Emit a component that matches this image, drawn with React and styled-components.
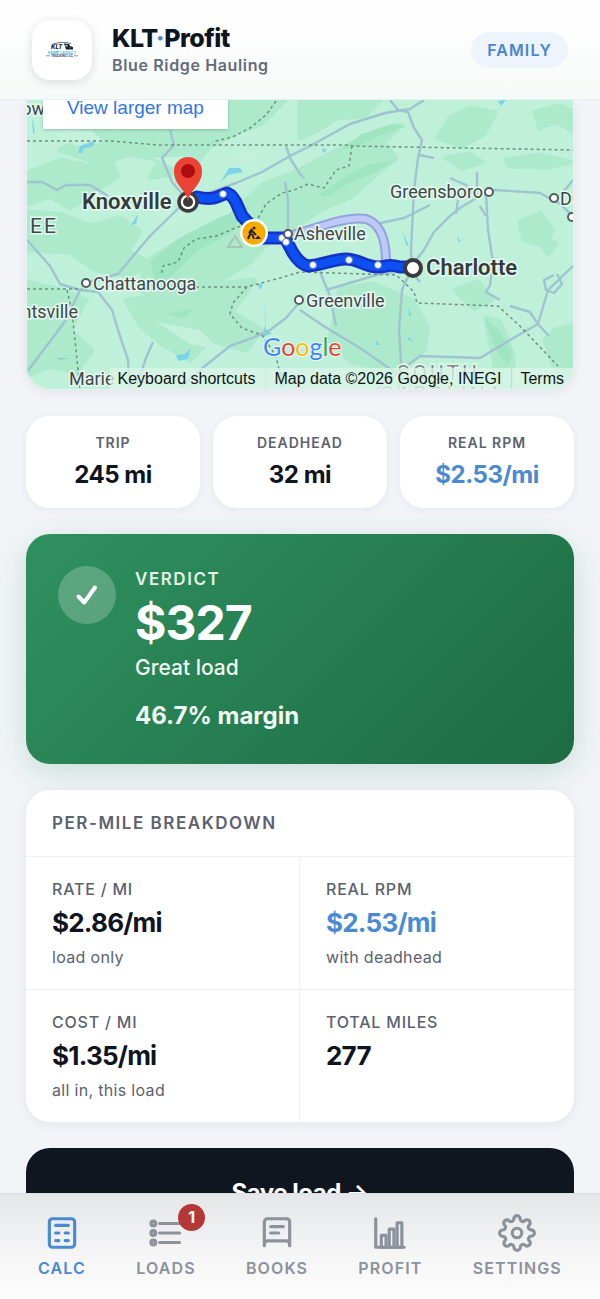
import React from "react";
import styled, { createGlobalStyle, css } from "styled-components";

const stats = [
  { label: "Trip", value: "245 mi" },
  { label: "Deadhead", value: "32 mi" },
  { label: "Real RPM", value: "$2.53/mi", accent: true },
];

const breakdown = [
  { label: "Rate / mi", value: "$2.86/mi", note: "load only" },
  { label: "Real RPM", value: "$2.53/mi", note: "with deadhead", accent: true },
  { label: "Cost / mi", value: "$1.35/mi", note: "all in, this load" },
  { label: "Total miles", value: "277" },
];

const tabs = [
  { label: "Calc", icon: CalcIcon, active: true },
  { label: "Loads", icon: LoadsIcon, count: 1 },
  { label: "Books", icon: BooksIcon },
  { label: "Profit", icon: ProfitIcon },
  { label: "Settings", icon: SettingsIcon },
];

export default function App() {
  return (
    <>
      <GlobalStyle />
      <Header>
        <LogoTile>
          <Logo />
        </LogoTile>
        <Brand>
          <AppName>
            KLT<Dot>·</Dot>Profit
          </AppName>
          <Company>Blue Ridge Hauling</Company>
        </Brand>
        <Plan>Family</Plan>
      </Header>

      <Main>
        <MapCard>
          <RouteMap />
          <LargerMap href="#map">View larger map</LargerMap>
          <Attribution>
            <MapButton type="button">Keyboard shortcuts</MapButton>
            <MapCredit>Map data ©2026 Google, INEGI</MapCredit>
            <MapTerms href="#terms">Terms</MapTerms>
          </Attribution>
        </MapCard>

        <Stats>
          {stats.map(stat => (
            <Stat key={stat.label}>
              <StatLabel>{stat.label}</StatLabel>
              <StatValue $accent={stat.accent}>{stat.value}</StatValue>
            </Stat>
          ))}
        </Stats>

        <Verdict>
          <CheckCircle>
            <svg width="28" height="28" viewBox="0 0 28 28" fill="none">
              <path
                d="M5.5 15.5l5.7 6L22 6.500"
                stroke="#fff"
                strokeWidth="4"
                strokeLinecap="round"
                strokeLinejoin="round"
              />
            </svg>
          </CheckCircle>
          <div>
            <VerdictLabel>Verdict</VerdictLabel>
            <Profit>$327</Profit>
            <VerdictText>Great load</VerdictText>
            <Margin>46.7% margin</Margin>
          </div>
        </Verdict>

        <Card>
          <CardTitle>Per-mile breakdown</CardTitle>
          <Grid>
            {breakdown.map(cell => (
              <Cell key={cell.label}>
                <CellLabel>{cell.label}</CellLabel>
                <CellValue $accent={cell.accent}>{cell.value}</CellValue>
                {cell.note && <CellNote>{cell.note}</CellNote>}
              </Cell>
            ))}
          </Grid>
        </Card>

        <SaveButton type="button">Save load →</SaveButton>
      </Main>

      <Nav>
        {tabs.map(({ label, icon: Icon, active, count }) => (
          <Tab key={label} type="button" $active={active}>
            <Icon />
            {label}
            {count && <Count>{count}</Count>}
          </Tab>
        ))}
      </Nav>
    </>
  );
}

function Logo() {
  return (
    <svg width="34" height="18" viewBox="0 0 34 18">
      <path d="M8 3Q15 .6 22 1.600l4 1" fill="none" stroke="#4a5560" strokeWidth=".8" />
      <text x="6" y="8" fontSize="6" fontWeight="800" fontStyle="italic" fill="#1b232b">
        KLT
      </text>
      <path d="M19 2.500l5 .5 1 2 3 1.200V8.500h-7z" fill="#151b21" />
      <path d="M20.500 4h2v1.500h-2zM24 6.800h2" fill="#8aa" stroke="#8aa" strokeWidth=".6" />
      <text x="17" y="12.500" textAnchor="middle" fontSize="4" fontWeight="600" fill="#4bb4dc">
        KEMP LEGACY
      </text>
      <path d="M1 14.800h4M29 14.800h4" stroke="#5a6670" strokeWidth=".7" />
      <text x="17" y="16" textAnchor="middle" fontSize="3" fontWeight="700" fill="#39434c">
        TRUCKING LLC
      </text>
    </svg>
  );
}

function NavIcon({ children }) {
  return (
    <svg
      width="38"
      height="38"
      viewBox="0 0 24 24"
      fill="none"
      stroke="currentColor"
      strokeWidth="2"
      strokeLinecap="round"
      strokeLinejoin="round"
    >
      {children}
    </svg>
  );
}

function CalcIcon() {
  return (
    <NavIcon>
      <rect x="4" y="3" width="16" height="18" rx="2" />
      <path d="M8 7.200h8M8 12h2M14 12h2M8 16.800h2M14 16.800h2" />
    </NavIcon>
  );
}

function LoadsIcon() {
  return (
    <NavIcon>
      <path d="M8 6h12.500M8 12h12.500M8 18h12.500" />
      <circle cx="4" cy="6" r="1.500" fill="currentColor" fillOpacity=".6" />
      <circle cx="4" cy="12" r="1.500" fill="currentColor" fillOpacity=".6" />
      <circle cx="4" cy="18" r="1.500" fill="currentColor" fillOpacity=".6" />
    </NavIcon>
  );
}

function BooksIcon() {
  return (
    <NavIcon>
      <path d="M4 20V5a2 2 0 0 1 2-2h12a2 2 0 0 1 2 2v15c0-2-.8-3-2-3H6c-1.200 0-2 1-2 3M8 8h8M8 12h5" />
    </NavIcon>
  );
}

function ProfitIcon() {
  return (
    <NavIcon>
      <path d="M3 3v18h18" />
      <rect x="6.500" y="13.500" width="3" height="7.500" />
      <rect x="11.500" y="9.500" width="3" height="11.500" />
      <rect x="16.500" y="5.500" width="3" height="15.500" />
    </NavIcon>
  );
}

function SettingsIcon() {
  return (
    <NavIcon>
      <circle cx="12" cy="12" r="3" />
      <path d="M19.4 15a1.65 1.65 0 0 0 .33 1.82l.06.06a2 2 0 0 1 0 2.83 2 2 0 0 1-2.83 0l-.06-.06a1.65 1.65 0 0 0-1.82-.33 1.65 1.65 0 0 0-1 1.51V21a2 2 0 0 1-2 2 2 2 0 0 1-2-2v-.09A1.65 1.65 0 0 0 9 19.4a1.65 1.65 0 0 0-1.82.33l-.06.06a2 2 0 0 1-2.83 0 2 2 0 0 1 0-2.83l.06-.06a1.65 1.65 0 0 0 .33-1.82 1.65 1.65 0 0 0-1.51-1H3a2 2 0 0 1-2-2 2 2 0 0 1 2-2h.09A1.65 1.65 0 0 0 4.6 9a1.65 1.65 0 0 0-.33-1.82l-.06-.06a2 2 0 0 1 0-2.83 2 2 0 0 1 2.83 0l.06.06a1.65 1.65 0 0 0 1.82.33H9a1.65 1.65 0 0 0 1-1.51V3a2 2 0 0 1 2-2 2 2 0 0 1 2 2v.09a1.65 1.65 0 0 0 1 1.51 1.65 1.65 0 0 0 1.82-.33l.06-.06a2 2 0 0 1 2.83 0 2 2 0 0 1 0 2.83l-.06.06a1.65 1.65 0 0 0-.33 1.82V9a1.65 1.65 0 0 0 1.51 1H21a2 2 0 0 1 2 2 2 2 0 0 1-2 2h-.09a1.65 1.65 0 0 0-1.51 1z" />
    </NavIcon>
  );
}

const route =
  "M197 197Q210 200 217 197L227 193Q234 196 238 207L242 216L254 229L262 238H285L293 253Q300 264 308 266C323 265 333 259 346 259S365 267 378 267S385 263 400 267H412";

function RouteMap() {
  return (
    <MapSvg viewBox="26 100 548 290" role="img" aria-label="Route from Charlotte to Knoxville">
      <rect x="26" y="100" width="548" height="290" fill="#bff0da" />

      {/* forest */}
      <g fill="#adeacc" stroke="#adeacc" strokeWidth="5" strokeLinejoin="round">
        <path d="M76 100H285L262 123L242 131L210 146L190 170L150 178L160 160L130 154L100 164L60 150L90 135L70 118z" />
        <path d="M30 172L60 160L88 166L110 158L118 176L88 196L70 208L50 196L27 204z" />
        <path d="M27 212L60 214L90 226L120 218L140 232L128 252L150 262L130 276L96 270L70 252L27 250z" />
        <path d="M145 262L190 235L230 216L262 185L300 170L338 150L380 130L402 125L384 142L396 158L372 178L352 196L320 210L300 224L270 240L250 262L220 280L180 290L160 300L140 290z" />
        <path d="M126 300L170 295L210 285L255 280L232 312L262 330L246 350L210 340L190 360L160 342L140 325z" />
        <path d="M27 282L60 290L86 300L70 330L92 350L76 372L50 366L27 376z" />
        <path d="M300 100H380L364 116L336 118L318 130L300 138z" />
        <path d="M450 118L470 108L495 113L484 134L462 146L438 138z" />
        <path d="M535 112L560 106L573 112V130L556 122L540 128z" />
        <path d="M520 222L540 213L552 230L546 246L524 240zM535 236L556 244L548 254z" />
        <path d="M340 290L372 284L412 300L428 328L424 350L396 372L352 362L330 340z" />
        <path d="M455 290L478 282L492 300L474 308zM486 318L500 322L513 356V390H500L492 350z" />
        <path d="M446 158L470 154L482 162L462 168zM506 160L540 155L570 162L548 167L510 166z" />
        <path d="M545 340L556 330L573 326V378L556 372z" />
      </g>
      <g fill="#9fe5c2">
        <path d="M150 262L176 240L218 218L250 206L232 232L196 252L172 276L156 284z" />
        <path d="M340 150L362 134L392 124L406 126L380 136L358 146z" />
        <path d="M318 196L346 176L368 165L396 160L372 174L346 184L330 196z" />
        <path d="M484 318L500 332L512 352L508 366L494 346z" />
        <path d="M166 314L196 308L184 318z" />
      </g>
      <g fill="#c3f1dc">
        <path d="M96 110L130 118L118 130L92 126zM56 134L92 130L104 142L76 146zM160 120L190 116L182 130zM154 158L190 156L178 170zM232 156L262 150L250 166zM150 206L190 214L170 232zM156 322L200 330L220 350L190 344z" />
      </g>

      {/* water */}
      <g fill="#7dd3e8">
        <path d="M32 118L35 132L33 134zM80 146L96 140L92 147L84 148L82 153H78zM220 183L229 168L240 168L243 172L228 175z" />
        <path d="M131 225L138 214L136 224zM257 285L263 283L261 290zM176 355L184 354L191 349L188 359L178 361zM56 358L70 358L60 360z" />
        <path d="M403 232L409 246L406 245zM457 236L461 242L458 241zM498 101L506 100L501 106zM408 308L412 316H409zM376 340L380 345H376zM408 337L414 341L408 340z" />
        <path d="M264 300L266 322L262 338L272 333L266 330zM280 372H284V386H280zM322 148L327 150L323 153z" />
      </g>

      {/* highways */}
      <g fill="none" stroke="#a0c3d0" strokeWidth="2.4" strokeLinejoin="round">
        <path d="M27 182L42 182L57 190L66 185L90 185L108 196" />
        <path d="M170 130L174 145L162 158L172 182L187 200L150 236L118 274L88 282M66 320L27 372" />
        <path d="M27 240L50 266L60 284L80 290L66 320M80 290L98 292L112 310L118 330L128 360L130 390" />
        <path d="M190 200L236 183L262 172L290 156L310 146L350 124L385 113L410 109L424 100" />
        <path d="M390 100L398 110L408 112L414 128L422 140L418 158L414 190L411 250L412 268L402 290L399 330L402 378L398 390" />
        <path d="M419 155L434 158M286 146L290 158L300 174L304 178M288 236V200L285 182" />
        <path d="M412 265L424 250L434 232L450 216L460 208L480 196L495 190L540 193L560 204L573 216" />
        <path d="M376 224L404 218L430 205M450 178L466 185L475 196L477 190V172M486 194L488 230L493 262L490 285L486 292L500 300" />
        <path d="M480 206L486 216M458 200L456 214M573 180L560 196" />
        <path d="M298 304L286 318L270 330L252 338L230 346L200 370L180 388" />
        <path d="M300 310L322 325L340 336L360 348L386 366L412 384" />
        <path d="M320 272L330 296L336 326M326 290L380 274L410 270L420 282M376 390L420 356L480 358L510 340L538 324L548 290L573 266" />
        <path d="M510 306L530 312L538 324L549 336M554 275L544 280L546 290L554 293L562 284L557 274M153 342L146 358L140 376" />
      </g>

      {/* state lines */}
      <g fill="none" stroke="#6d927f" strokeWidth="1.500" strokeDasharray="3 3">
        <path d="M27 141H112L160 145H350L352 146L573 150" />
        <path d="M276 101L266 115L250 128L232 137L212 142" />
        <path d="M352 146L349 166L336 170L324 188L308 184L294 190L282 193L266 204L256 222L238 227L216 236L196 239L184 248L178 262L163 266L161 276" />
        <path d="M27 289H82M196 287H246L280 278L300 272L396 275L406 284L414 292L417 303L498 306L520 326L558 366" />
        <path d="M247 287L233 303L230 314L242 328L262 335L276 356L280 374M67 290L72 312L76 350L80 390" />
      </g>
      <path d="M228 247L235 236L242 247z" fill="none" stroke="#a9c5b5" strokeWidth="2" />

      {/* alternate and main route */}
      <g fill="none" strokeLinecap="round" strokeLinejoin="round">
        <path
          d="M289 236Q315 228 335 222Q356 217 366 219C382 224 386 242 386 262"
          stroke="#95a3dd"
          strokeWidth="10"
        />
        <path
          d="M289 236Q315 228 335 222Q356 217 366 219C382 224 386 242 386 262"
          stroke="#bdc9f7"
          strokeWidth="6"
        />
        <path d={route} stroke="#1431c4" strokeWidth="13" />
        <path d={route} stroke="#0d50f2" strokeWidth="8" />
      </g>
      <g fill="#fff" stroke="#6880b4" strokeWidth="1">
        <circle cx="223" cy="194" r="3.500" />
        <circle cx="282" cy="238" r="3.500" />
        <circle cx="286" cy="242" r="3.500" />
        <circle cx="313" cy="265" r="3.500" />
        <circle cx="349" cy="260" r="3.500" />
        <circle cx="378" cy="265" r="3.500" />
      </g>

      <g fill="#fff" stroke="#555c60" strokeWidth="2">
        <circle cx="288" cy="234" r="4" />
        <circle cx="86" cy="283" r="4" />
        <circle cx="299" cy="300" r="4" />
        <circle cx="489" cy="192" r="4" />
        <circle cx="554" cy="198" r="4" />
        <circle cx="572" cy="217" r="4" />
      </g>
      <circle cx="188" cy="202" r="9" fill="#fff" stroke="#3b3b3d" strokeWidth="3.500" />
      <circle cx="188" cy="202" r="5" fill="#3b3b3d" />
      <circle cx="413" cy="268" r="8" fill="#fff" stroke="#3b3b3d" strokeWidth="4" />

      <path
        d="M188 202C187 190 174 186 174 171A14 14 0 0 1 202 171C202 186 189 190 188 202z"
        fill="#ea4335"
      />
      <circle cx="188" cy="171" r="7" fill="#ad0d0d" />

      {/* road works */}
      <circle cx="254" cy="233" r="14" fill="#fff" />
      <circle cx="254" cy="233" r="11.500" fill="#fbab00" />
      <circle cx="254" cy="228" r="1.500" fill="#222" />
      <path
        d="M252 229l-3 4M251 230l5 5M251 232l-3 7M252 234l2 5"
        fill="none"
        stroke="#222"
        strokeWidth="2"
      />
      <path d="M255 239l3-3.500 3 3.500z" fill="#222" />

      <g
        fontFamily="Roboto, sans-serif"
        fontSize="18"
        fontWeight="400"
        fill="#3f4649"
        stroke="#e4f9ef"
        strokeWidth="3"
        paintOrder="stroke"
      >
        <text x="82" y="209" fontSize="22" fontWeight="600" fill="#35393b">
          Knoxville
        </text>
        <text x="426" y="275" fontSize="22" fontWeight="600" fill="#35393b">
          Charlotte
        </text>
        <text x="30" y="233" fontSize="21" letterSpacing="2">
          EE
        </text>
        <text x="45" y="115" textAnchor="end">
          Bow
        </text>
        <text x="93" y="290">Chattanooga</text>
        <text x="78" y="318" textAnchor="end">
          Huntsville
        </text>
        <text x="294" y="240">Asheville</text>
        <text x="306" y="307">Greenville</text>
        <text x="390" y="198">Greensboro</text>
        <text x="560" y="205">Durham</text>
        <text x="69" y="385">Marie</text>
        <text x="397" y="380" fontSize="21" letterSpacing="3" fill="#7e8b86">
          SOUTH
        </text>
        <text x="380" y="401" fontSize="21" letterSpacing="3" fill="#7e8b86">
          CAROLINA
        </text>
      </g>
      <text
        x="263"
        y="356"
        fontFamily="Lato, sans-serif"
        fontSize="25"
        fontWeight="400"
        stroke="#e9faf2"
        strokeWidth="2"
        paintOrder="stroke"
      >
        <tspan fill="#4285f4">G</tspan>
        <tspan fill="#ea4335">o</tspan>
        <tspan fill="#fbbc04">o</tspan>
        <tspan fill="#4285f4">g</tspan>
        <tspan fill="#34a853">l</tspan>
        <tspan fill="#ea4335">e</tspan>
      </text>
    </MapSvg>
  );
}

const GlobalStyle = createGlobalStyle`
  * {
    box-sizing: border-box;
  }
  body {
    margin: 0;
    background: #f2f4f8;
    color: #0e1420;
    font-family: Inter, "Liberation Sans", sans-serif;
    -webkit-font-smoothing: antialiased;
  }
  button {
    font: inherit;
    border: 0;
    cursor: pointer;
  }
`;

const caps = css`
  text-transform: uppercase;
  letter-spacing: 0.07em;
`;

const Header = styled.header`
  position: fixed;
  top: 0;
  left: 0;
  right: 0;
  z-index: 2;
  height: 100px;
  padding: 0 32px;
  display: flex;
  align-items: center;
  gap: 20px;
  background: linear-gradient(#fefefe 30%, #f4faf7);
  border-bottom: 1px solid #e9efee;
`;

const LogoTile = styled.div`
  flex: 0 0 60px;
  height: 60px;
  border-radius: 18px;
  display: flex;
  align-items: center;
  justify-content: center;
  background: #fff;
  box-shadow: 0 2px 10px rgba(20, 30, 60, 0.14);
`;

const Brand = styled.div`
  flex: 1;
`;

const AppName = styled.h1`
  margin: 0;
  font-size: 25px;
  line-height: 30px;
  font-weight: 800;
  letter-spacing: -0.02em;
`;

const Dot = styled.span`
  color: #4a8ad4;
`;

const Company = styled.div`
  font-size: 16px;
  line-height: 24px;
  font-weight: 600;
  letter-spacing: 0.04em;
  color: #646b79;
`;

const Plan = styled.span`
  ${caps}
  padding: 8px 16px;
  border-radius: 20px;
  font-size: 16px;
  line-height: 20px;
  font-weight: 600;
  color: #4a85cf;
  background: #edf4fc;
`;

const Main = styled.main`
  padding: 100px 26px 0;
  display: flex;
  flex-direction: column;
  gap: 26px;
`;

const MapCard = styled.section`
  position: relative;
  overflow: hidden;
  border-radius: 0 0 24px 24px;
  box-shadow: 0 2px 12px rgba(20, 30, 60, 0.08);

  &::after {
    content: "";
    position: absolute;
    inset: 0;
    border: 1px solid #e6f3ee;
    border-top: 0;
    border-radius: inherit;
    pointer-events: none;
  }
`;

const MapSvg = styled.svg`
  display: block;
  width: 100%;
`;

const LargerMap = styled.a`
  position: absolute;
  top: 0;
  left: 17px;
  padding: 0 24px 13px;
  font-family: "Liberation Sans", sans-serif;
  font-size: 19px;
  line-height: 16px;
  color: #2f78e4;
  text-decoration: none;
  background: #fff;
  box-shadow: 0 1px 3px rgba(0, 0, 0, 0.2);
`;

const Attribution = styled.div`
  position: absolute;
  right: 0;
  bottom: 0;
  display: flex;
  gap: 1px;
  font-family: "Liberation Sans", sans-serif;
  font-size: 16px;
  line-height: 22px;
  color: #101312;
`;

const credit = css`
  padding: 0 10px 0 8px;
  background: rgba(222, 245, 234, 0.75);
`;

const MapButton = styled.button`
  ${credit}
  color: inherit;
`;

const MapCredit = styled.span`
  ${credit}
`;

const MapTerms = styled.a`
  ${credit}
  color: inherit;
  text-decoration: none;
`;

const Stats = styled.section`
  display: grid;
  grid-template-columns: repeat(3, 1fr);
  gap: 13px;
`;

const Stat = styled.div`
  padding: 14px 8px;
  border-radius: 24px;
  text-align: center;
  background: #fff;
  box-shadow: 0 2px 10px rgba(20, 30, 60, 0.06);
`;

const StatLabel = styled.div`
  ${caps}
  font-size: 14px;
  line-height: 26px;
  font-weight: 600;
  color: #5b6270;
`;

const StatValue = styled.div`
  font-size: 24px;
  line-height: 38px;
  font-weight: 700;
  letter-spacing: -0.02em;
  color: ${props => (props.$accent ? "#4a8ad4" : "inherit")};
`;

const Verdict = styled.section`
  display: flex;
  align-items: flex-start;
  gap: 19px;
  padding: 32px;
  border-radius: 24px;
  color: #fff;
  background: linear-gradient(135deg, #2f915f, #1d6b43);
  box-shadow: 0 8px 30px rgba(40, 140, 90, 0.2);
`;

const CheckCircle = styled.div`
  flex: 0 0 58px;
  height: 58px;
  border-radius: 50%;
  display: flex;
  align-items: center;
  justify-content: center;
  background: rgba(255, 255, 255, 0.22);
`;

const VerdictLabel = styled.div`
  ${caps}
  font-size: 17px;
  line-height: 26px;
  font-weight: 600;
  letter-spacing: 0.09em;
  color: #e3f1e9;
`;

const Profit = styled.div`
  font-size: 48px;
  line-height: 62px;
  font-weight: 700;
  letter-spacing: -0.02em;
`;

const VerdictText = styled.div`
  font-size: 21px;
  line-height: 28px;
  font-weight: 500;
  color: #f2f9f5;
`;

const Margin = styled.div`
  margin-top: 18px;
  font-size: 24px;
  line-height: 32px;
  font-weight: 700;
  color: #f2f9f5;
`;

const Card = styled.section`
  overflow: hidden;
  border-radius: 24px;
  background: #fff;
  box-shadow: 0 2px 12px rgba(20, 30, 60, 0.07);
`;

const CardTitle = styled.h2`
  ${caps}
  margin: 0;
  padding: 20px 26px;
  font-size: 17px;
  line-height: 26px;
  font-weight: 600;
  letter-spacing: 0.09em;
  color: #5b6270;
`;

const Grid = styled.div`
  display: grid;
  grid-template-columns: 1fr 1fr;
`;

const Cell = styled.div`
  padding: 20px 26px;
  border-top: 1px solid #ecf0f1;

  &:nth-child(odd) {
    border-right: 1px solid #f0f3f4;
  }
`;

const CellLabel = styled.div`
  ${caps}
  font-size: 16px;
  line-height: 24px;
  font-weight: 500;
  letter-spacing: 0.05em;
  color: #5b6270;
`;

const CellValue = styled.div`
  font-size: 26px;
  line-height: 44px;
  font-weight: 700;
  letter-spacing: -0.03em;
  color: ${props => (props.$accent ? "#4a8ad4" : "inherit")};
`;

const CellNote = styled.div`
  font-size: 16px;
  line-height: 24px;
  letter-spacing: 0.02em;
  color: #5b6270;
`;

const SaveButton = styled.button`
  height: 88px;
  border-radius: 24px;
  font-size: 24px;
  font-weight: 700;
  letter-spacing: -0.02em;
  color: #fff;
  background: #101620;
`;

const Nav = styled.nav`
  position: fixed;
  left: 0;
  right: 0;
  bottom: 0;
  z-index: 2;
  height: 106px;
  padding: 20px 13px 0;
  display: flex;
  align-items: flex-start;
  justify-content: space-around;
  background: linear-gradient(#e5e6e8, #f6f6f7 60%, #fcfcfc);
  border-top: 1px solid #dcdee1;
`;

const Tab = styled.button`
  ${caps}
  position: relative;
  padding: 0;
  display: flex;
  flex-direction: column;
  align-items: center;
  gap: 4px;
  font-size: 16px;
  line-height: 24px;
  font-weight: 600;
  color: ${props => (props.$active ? "#4a8ad4" : "#8b929c")};
  background: none;
`;

const Count = styled.span`
  position: absolute;
  top: -10px;
  left: 42px;
  width: 27px;
  height: 27px;
  border-radius: 50%;
  font-size: 16px;
  line-height: 27px;
  font-weight: 700;
  letter-spacing: 0;
  color: #fff;
  background: #b53838;
`;
